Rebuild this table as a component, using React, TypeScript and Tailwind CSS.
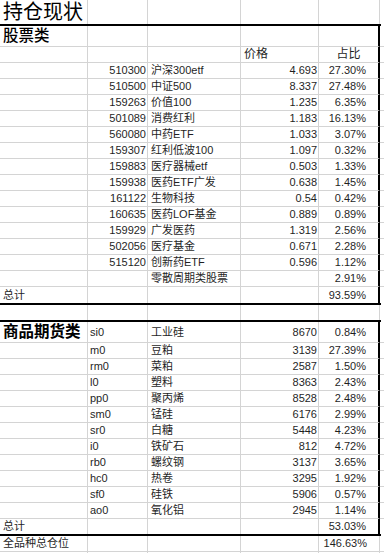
import React from 'react';

type Align = 'left' | 'right' | 'center';

interface RowProps {
  h: string; // full height class, e.g. h-[16px]
  cells: React.ReactNode[];
  align?: Align[];
  thickRight?: boolean;
  noBottom?: boolean;
}

const GRID = 'grid grid-cols-[88px_60px_93px_78px_61px_1fr]';
const line = 'border-[#d4d4d4]';

const padFor = (i: number, a: Align) => {
  if (a === 'center') return 'justify-center';
  if (a === 'left') return i === 1 ? 'justify-start pl-[2px]' : 'justify-start pl-[3px]';
  if (i === 4) return 'justify-end pr-[12px]';
  return 'justify-end pr-[1px]';
};

const Row: React.FC<RowProps> = ({ h, cells, align = ['left', 'right', 'left', 'right', 'right'], thickRight, noBottom }) => (
  <div className={`${GRID} ${h}`}>
    {[0, 1, 2, 3, 4, 5].map((i) => {
      const right =
        i === 5 ? '' : i === 4 && thickRight ? 'border-r-2 border-r-black' : `border-r ${line}`;
      const bottom = noBottom ? '' : `border-b ${line}`;
      return (
        <div
          key={i}
          className={`flex items-center whitespace-nowrap overflow-visible ${right} ${bottom} ${i < 5 ? padFor(i, align[i]) : ''}`}
        >
          {cells[i]}
        </div>
      );
    })}
  </div>
);

const Thick: React.FC = () => <div className="h-[2px] w-[381px] bg-black" />;

const stocks = [
  ['510300', '沪深300etf', '4.693', '27.30%'],
  ['510500', '中证500', '8.337', '27.48%'],
  ['159263', '价值100', '1.235', '6.35%'],
  ['501089', '消费红利', '1.183', '16.13%'],
  ['560080', '中药ETF', '1.033', '3.07%'],
  ['159307', '红利低波100', '1.097', '0.32%'],
  ['159883', '医疗器械etf', '0.503', '1.33%'],
  ['159938', '医药ETF广发', '0.638', '1.45%'],
  ['161122', '生物科技', '0.54', '0.42%'],
  ['160635', '医药LOF基金', '0.889', '0.89%'],
  ['159929', '广发医药', '1.319', '2.56%'],
  ['502056', '医疗基金', '0.671', '2.28%'],
  ['515120', '创新药ETF', '0.596', '1.12%'],
];

const futures = [
  ['m0', '豆粕', '3139', '27.39%'],
  ['rm0', '菜粕', '2587', '1.50%'],
  ['l0', '塑料', '8363', '2.43%'],
  ['pp0', '聚丙烯', '8528', '2.48%'],
  ['sm0', '锰硅', '6176', '2.99%'],
  ['sr0', '白糖', '5448', '4.23%'],
  ['i0', '铁矿石', '812', '4.72%'],
  ['rb0', '螺纹钢', '3137', '3.65%'],
  ['hc0', '热卷', '3295', '1.92%'],
  ['sf0', '硅铁', '5906', '0.57%'],
  ['ao0', '氧化铝', '2945', '1.14%'],
];

const futAlign: Align[] = ['left', 'left', 'left', 'right', 'right'];

export default function App() {
  return (
    <div
      className="w-[384px] h-[553px] overflow-hidden bg-white text-[11px] leading-[15px] text-[#1f1f1f]"
      style={{ fontFamily: '"Liberation Sans", "Noto Sans CJK SC", sans-serif' }}
    >
      {/* title */}
      <Row
        h="h-[24px]"
        noBottom
        cells={[<span className="text-[20px] leading-[24px] text-black">持仓现状</span>]}
      />
      <Thick />

      {/* 股票类 */}
      <Row
        h="h-[21px]"
        thickRight
        cells={[<span className="text-[15.5px] leading-[20px] font-medium text-black">股票类</span>]}
      />
      <Row
        h="h-[16px]"
        thickRight
        align={['left', 'right', 'left', 'left', 'center']}
        cells={['', '', '', <span className="text-[12px]">价格</span>, <span className="text-[12px]">占比</span>]}
      />
      {stocks.map((s) => (
        <Row key={s[0]} h="h-[16px]" thickRight cells={['', s[0], s[1], s[2], s[3]]} />
      ))}
      <Row h="h-[16px]" thickRight cells={['', '', '零散周期类股票', '', '2.91%']} />
      <Row h="h-[16px]" thickRight noBottom cells={['总计', '', '', '', '93.59%']} />
      <Thick />

      <Row h="h-[15px]" noBottom cells={[]} />
      <Thick />

      {/* 商品期货类 */}
      <Row
        h="h-[21px]"
        thickRight
        align={futAlign}
        cells={[
          <span className="text-[15.5px] leading-[20px] font-bold text-black">商品期货类</span>,
          'si0',
          '工业硅',
          '8670',
          '0.84%',
        ]}
      />
      {futures.map((f) => (
        <Row key={f[0]} h="h-[16px]" thickRight align={futAlign} cells={['', f[0], f[1], f[2], f[3]]} />
      ))}
      <Row h="h-[15px]" thickRight noBottom cells={['总计', '', '', '', '53.03%']} />
      <Thick />
      <Row h="h-[16px]" cells={['全品种总仓位', '', '', '', '146.63%']} />
      <Row h="h-[16px]" cells={[]} />
    </div>
  );
}
